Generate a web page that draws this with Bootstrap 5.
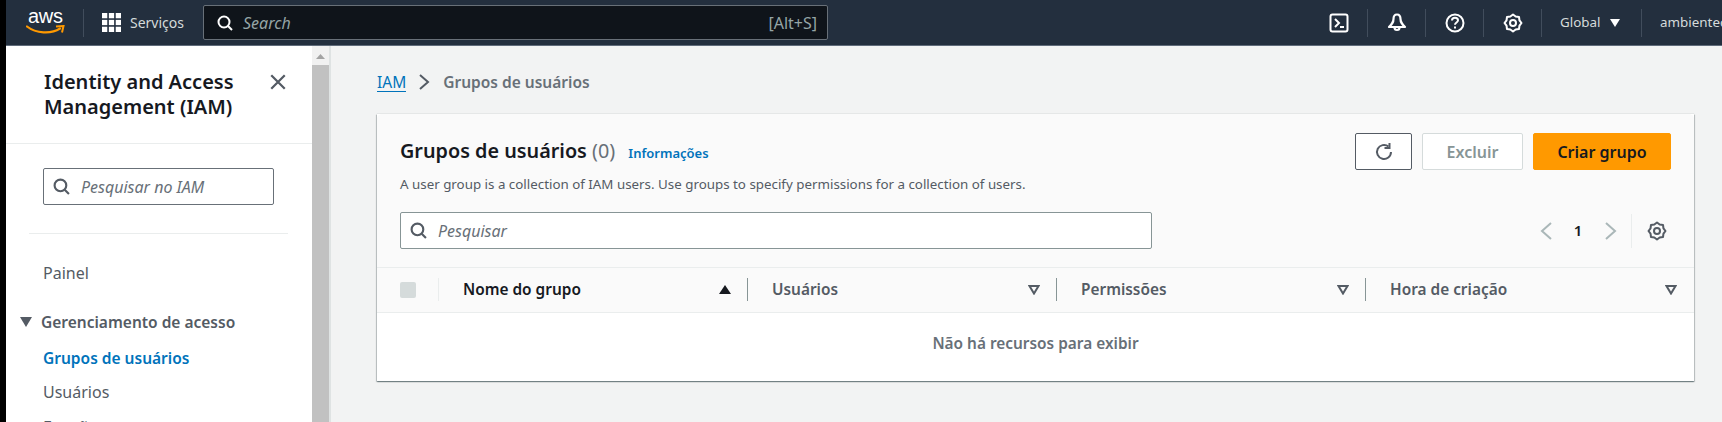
<!doctype html>
<html lang="pt-BR">
<head>
<meta charset="utf-8">
<title>Grupos de usuários</title>
<link rel="stylesheet" href="https://cdn.jsdelivr.net/npm/bootstrap@5.3.0/dist/css/bootstrap.min.css">
<style>
html,body{height:422px;overflow:hidden;}
body{background:#000;font-family:"Noto Sans","Open Sans",sans-serif;font-size:16px;color:#16191f;}
svg{display:block;flex:none;}
.shell{margin-left:6px;height:422px;display:flex;flex-direction:column;}
.topbar{height:46px;flex:none;background:#232f3e;color:#d5dbdb;border-bottom:1px solid #5f6b7a;overflow:hidden;font-size:14px;white-space:nowrap;}
.topbar>*{flex:none;}
.aws-logo{width:40px;margin-left:20px;color:#fff;height:30px;}
.aws-word{font-family:"Liberation Sans",sans-serif;font-size:20px;line-height:17px;letter-spacing:-.3px;display:block;padding-left:2px;}
.aws-smile{margin-top:0;}
.top-sep{width:1px;height:28px;background:#414d5c;flex:none;}
.sep-logo{margin-left:17px;margin-right:18px;}
.svc-label{margin-left:9px;width:53px;}
.top-search{margin-left:20px;width:625px;height:35px;background:#0f141a;border:1px solid #687078;border-radius:2px;padding:0 10px 0 13px;font-size:16px;color:#95a5a6;}
.top-search em{margin-left:10px;flex:1;}
.top-tools{margin-left:482px;}
.tool-cell{width:57px;}
.region{margin-left:18px;width:44px;font-size:13.400px;}
.region-caret{margin-left:6px;margin-right:21px;}
.user-name{margin-left:18px;font-size:13.400px;}
.workspace{flex:1;min-height:0;display:flex;}
.side-nav{width:306px;flex:none;background:#fff;overflow:hidden;}
.side-title{height:98px;padding:23px 25px 0 38px;border-bottom:1px solid #eaeded;font-size:20px;line-height:25px;font-weight:600;}
.side-close{color:#545b64;margin-top:4px;}
.side-search{margin:24px 38px 0 37px;height:37px;border:1px solid #687078;border-radius:2px;padding:0 9px;color:#687078;font-size:16px;}
.side-search em{margin-left:11px;}
.side-rule{margin:28px 24px 0 23px;border-top:1px solid #eaeded;}
.nav-item-plain{color:#545b64;margin-left:37px;line-height:20px;}
.item-painel{margin-top:29px;}
.nav-group{margin-top:29px;margin-left:14px;color:#545b64;font-weight:600;line-height:20px;font-size:15.500px;}
.nav-group svg{margin-right:9px;}
.nav-active{color:#0073bb;font-weight:600;margin:16px 0 0 37px;line-height:20px;font-size:15.500px;}
.item-users{margin-top:14px;}
.item-cut{margin-top:15px;}
.fake-scroll{width:17px;flex:none;background:#f1f1f1;display:flex;flex-direction:column;align-items:center;}
.scroll-arrow{margin:8px 0 6px;}
.scroll-thumb{flex:1;width:100%;background:#c1c1c1;}
.main-pane{flex:1;min-width:0;background:#f2f3f3;border-left:2px solid #dfe3e3;padding:25px 28px 0 46px;}
.crumbs{height:22px;line-height:22px;}
.crumb-link{color:#0073bb;text-decoration:none;border-bottom:1px solid #0073bb;line-height:18px;font-size:15.500px;}
.crumb-chev{margin:0 13px;color:#545b64;}
.crumb-now{color:#687078;font-weight:600;font-size:15.500px;}
.group-card{margin-top:21px;height:267px;border:0;border-radius:0;background:#fff;box-shadow:0 0 1px 0 rgba(0,28,36,.3),0 1px 1px 0 rgba(0,28,36,.3),1px 1px 1px 0 rgba(0,28,36,.15),-1px 1px 1px 0 rgba(0,28,36,.15);}
.card-top{background:#fafafa;height:154px;padding:19px 23px 0 23px;border:0;border-radius:0;border-bottom:1px solid #eaeded;}
.title-block{margin-top:6px;}
.card-name{font-size:19.800px;line-height:24px;font-weight:600;margin:0;}
.card-count{font-weight:400;color:#687078;}
.info-link{color:#0073bb;font-size:13px;font-weight:600;text-decoration:none;margin-left:8px;}
.card-desc{font-size:13.350px;line-height:16px;color:#545b64;margin:11px 0 0;}
.act-row{gap:10px;}
.act-btn{height:37px;border-radius:2px;font-size:16px;font-weight:600;padding:0;display:flex;align-items:center;justify-content:center;}
.btn-reload{width:57px;background:#fff;border:1px solid #545b64;color:#545b64;}
.btn-off,.btn-off:disabled{width:101px;background:#fff;border:1px solid #d5dbdb;color:#879596;opacity:1;}
.btn-make{width:138px;background:#ff9900;border:1px solid #ff9900;color:#16191f;}
.tool-row{margin-top:20px;}
.list-search{width:752px;height:37px;background:#fff;border:1px solid #879596;border-radius:2px;padding:0 9px;color:#687078;font-size:16px;}
.list-search em{margin-left:11px;}
.pager{color:#aab7b8;}
.pager b{color:#16191f;font-size:15px;font-weight:600;width:12px;text-align:center;margin:0 21px 0 20px;}
.pager-rule{width:1px;height:34px;background:#eaeded;margin:0 15px 0 14px;}
.pager-gear{color:#545b64;margin-right:4px;}
.grp-table{table-layout:fixed;width:1317px;margin:0;}
.grp-table th{background:#fafafa;height:44px;padding:0;border-bottom:1px solid #eaeded;font-size:15.400px;font-weight:600;color:#545b64;vertical-align:middle;}
.grp-table td{height:68px;padding:0 0 5px;border:0;text-align:center;color:#687078;font-weight:600;background:#fff;vertical-align:middle;font-size:15.400px;}
.c-check{width:62px;}
.c-name{width:309px;}
.c-users{width:309px;}
.c-perm{width:309px;}
.grp-table th .cell{height:23px;padding-right:16px;border-right:1px solid #879596;padding-left:24px;}
.grp-table th:first-child .cell{border-right-color:#eaeded;padding:0 0 0 23px;}
.grp-table th:last-child .cell{border-right:0;padding-right:17px;}
.grp-table th .first-col{color:#16191f;}
.box-check{width:16px;height:16px;background:#d5dbdb;border-radius:2px;}
</style>
</head>
<body>
<div class="shell">
  <header class="topbar d-flex align-items-center">
    <div class="aws-logo">
      <span class="aws-word">aws</span>
      <svg class="aws-smile" width="40" height="10" viewBox="0 0 40 10"><path d="M1 1.500c9 7 24 8 33 2" fill="none" stroke="#ff9900" stroke-width="2.200" stroke-linecap="round"/><path d="M30 1.500l7.500-.5-1.500 6.500" fill="none" stroke="#ff9900" stroke-width="2"/></svg>
    </div>
    <div class="top-sep sep-logo"></div>
    <svg width="19" height="19" viewBox="0 0 18 18" fill="#fff"><rect width="5" height="5"/><rect x="6.500" width="5" height="5"/><rect x="13" width="5" height="5"/><rect y="6.500" width="5" height="5"/><rect x="6.500" y="6.500" width="5" height="5"/><rect x="13" y="6.500" width="5" height="5"/><rect y="13" width="5" height="5"/><rect x="6.500" y="13" width="5" height="5"/><rect x="13" y="13" width="5" height="5"/></svg>
    <span class="svc-label">Serviços</span>
    <div class="top-search d-flex align-items-center">
      <svg width="16" height="16" viewBox="0 0 16 16" fill="none" stroke="#fff" stroke-width="2"><circle cx="7" cy="7" r="5.500"/><path d="M11 11l4 4"/></svg>
      <em>Search</em><span>[Alt+S]</span>
    </div>
    <div class="top-tools d-flex align-items-center">
      <div class="tool-cell d-flex justify-content-center"><svg width="20" height="20" viewBox="0 0 20 20" fill="none" stroke="#fff" stroke-width="2"><rect x="1.500" y="1.500" width="17" height="17" rx="2"/><path d="M6 6l4 4-4 4M11 14h4"/></svg></div>
      <div class="top-sep"></div>
      <div class="tool-cell d-flex justify-content-center"><svg width="20" height="20" viewBox="0 0 20 20" fill="none" stroke="#fff" stroke-width="2.200" stroke-linejoin="round"><path d="M10 1.500c-2.500 0-3.500 2-3.500 4.500 0 3.500-1.500 5-4.500 8h16c-3-3-4.500-4.500-4.500-8 0-2.500-1-4.500-3.500-4.500z"/><path d="M7.500 14.500a2.500 2.500 0 0 0 5 0"/></svg></div>
      <div class="top-sep"></div>
      <div class="tool-cell d-flex justify-content-center"><svg width="20" height="20" viewBox="0 0 20 20" fill="none" stroke="#fff" stroke-width="2"><circle cx="10" cy="10" r="8.500"/><path d="M7 7.500c0-1.700 1.300-2.700 3-2.700s3 1 3 2.500c0 2.200-3 2.200-3 4.500"/><path d="M10 13.500v2"/></svg></div>
      <div class="top-sep"></div>
      <div class="tool-cell d-flex justify-content-center"><svg width="20" height="20" viewBox="0 0 20 20" fill="none" stroke="#fff" stroke-width="2" stroke-linejoin="round"><path d="M18.500 10 16.470 12.680 16.010 16.010 12.680 16.470 10 18.500 7.320 16.470 3.990 16.010 3.530 12.680 1.500 10 3.530 7.320 3.990 3.990 7.320 3.530 10 1.500 12.680 3.530 16.010 3.990 16.470 7.320z"/><circle cx="10" cy="10" r="3"/></svg></div>
      <div class="top-sep"></div>
      <span class="region">Global</span>
      <svg class="region-caret" width="10" height="8" viewBox="0 0 10 8" fill="#fff"><path d="M0 0h10L5 8z"/></svg>
      <div class="top-sep"></div>
      <span class="user-name">ambientec</span>
    </div>
  </header>
  <div class="workspace">
    <nav class="side-nav">
      <div class="side-title d-flex justify-content-between align-items-start">
        <span>Identity and Access<br>Management (IAM)</span>
        <svg class="side-close" width="18" height="18" viewBox="0 0 16 16" fill="none" stroke="currentColor" stroke-width="2"><path d="M2 2l12 12M14 2L2 14"/></svg>
      </div>
      <div class="side-search d-flex align-items-center">
        <svg width="17" height="17" viewBox="0 0 16 16" fill="none" stroke="#545b64" stroke-width="2"><circle cx="7" cy="7" r="5.500"/><path d="M11 11l4 4"/></svg>
        <em>Pesquisar no IAM</em>
      </div>
      <div class="side-rule"></div>
      <div class="nav-item-plain item-painel">Painel</div>
      <div class="nav-group d-flex align-items-center"><svg width="12" height="10" viewBox="0 0 12 10" fill="#545b64"><path d="M0 0h12L6 10z"/></svg><span>Gerenciamento de acesso</span></div>
      <div class="nav-active">Grupos de usuários</div>
      <div class="nav-item-plain item-users">Usuários</div>
      <div class="nav-item-plain item-cut">Funções</div>
    </nav>
    <div class="fake-scroll">
      <svg class="scroll-arrow" width="9" height="5" viewBox="0 0 9 5" fill="#a3a3a3"><path d="M4.500 0L9 5H0z"/></svg>
      <div class="scroll-thumb"></div>
    </div>
    <main class="main-pane">
      <div class="crumbs d-flex align-items-center">
        <a class="crumb-link" href="#">IAM</a>
        <svg class="crumb-chev" width="11" height="16" viewBox="0 0 11 16" fill="none" stroke="currentColor" stroke-width="2"><path d="M1 1l8 7-8 7"/></svg>
        <span class="crumb-now">Grupos de usuários</span>
      </div>
      <section class="card group-card">
        <div class="card-header card-top">
          <div class="d-flex justify-content-between align-items-start">
            <div class="title-block">
              <h2 class="card-name">Grupos de usuários <span class="card-count">(0)</span> <a class="info-link" href="#">Informações</a></h2>
              <p class="card-desc">A user group is a collection of IAM users. Use groups to specify permissions for a collection of users.</p>
            </div>
            <div class="d-flex act-row">
              <button class="btn act-btn btn-reload" type="button" aria-label="Atualizar"><svg width="20" height="20" viewBox="0 0 20 20" fill="none" stroke="currentColor" stroke-width="2"><path d="M17 10a7 7 0 1 1-2.500-5.400"/><path d="M15.500 1v5h-5"/></svg></button>
              <button class="btn act-btn btn-off" type="button" disabled>Excluir</button>
              <button class="btn act-btn btn-make" type="button">Criar grupo</button>
            </div>
          </div>
          <div class="tool-row d-flex justify-content-between align-items-center">
            <div class="list-search d-flex align-items-center">
              <svg width="17" height="17" viewBox="0 0 16 16" fill="none" stroke="#545b64" stroke-width="2"><circle cx="7" cy="7" r="5.500"/><path d="M11 11l4 4"/></svg>
              <em>Pesquisar</em>
            </div>
            <div class="pager d-flex align-items-center">
              <svg width="12" height="18" viewBox="0 0 12 18" fill="none" stroke="currentColor" stroke-width="2"><path d="M11 1L2 9l9 8"/></svg>
              <b>1</b>
              <svg width="12" height="18" viewBox="0 0 12 18" fill="none" stroke="currentColor" stroke-width="2"><path d="M1 1l9 8-9 8"/></svg>
              <div class="pager-rule"></div>
              <svg class="pager-gear" width="20" height="20" viewBox="0 0 20 20" fill="none" stroke="currentColor" stroke-width="2" stroke-linejoin="round"><path d="M18.500 10 16.470 12.680 16.010 16.010 12.680 16.470 10 18.500 7.320 16.470 3.990 16.010 3.530 12.680 1.500 10 3.530 7.320 3.990 3.990 7.320 3.530 10 1.500 12.680 3.530 16.010 3.990 16.470 7.320z"/><circle cx="10" cy="10" r="3"/></svg>
            </div>
          </div>
        </div>
        <table class="table grp-table">
          <colgroup><col class="c-check"><col class="c-name"><col class="c-users"><col class="c-perm"><col></colgroup>
          <thead><tr>
            <th><div class="cell d-flex align-items-center"><div class="box-check"></div></div></th>
            <th><div class="cell first-col d-flex justify-content-between align-items-center"><span>Nome do grupo</span><svg width="12" height="9" viewBox="0 0 12 9" fill="#16191f"><path d="M6 0l6 9H0z"/></svg></div></th>
            <th><div class="cell d-flex justify-content-between align-items-center"><span>Usuários</span><svg width="12" height="10" viewBox="0 0 12 10" fill="none" stroke="#545b64" stroke-width="2"><path d="M1.500 1h9L6 8.500z"/></svg></div></th>
            <th><div class="cell d-flex justify-content-between align-items-center"><span>Permissões</span><svg width="12" height="10" viewBox="0 0 12 10" fill="none" stroke="#545b64" stroke-width="2"><path d="M1.500 1h9L6 8.500z"/></svg></div></th>
            <th><div class="cell d-flex justify-content-between align-items-center"><span>Hora de criação</span><svg width="12" height="10" viewBox="0 0 12 10" fill="none" stroke="#545b64" stroke-width="2"><path d="M1.500 1h9L6 8.500z"/></svg></div></th>
          </tr></thead>
          <tbody><tr><td colspan="5">Não há recursos para exibir</td></tr></tbody>
        </table>
      </section>
    </main>
  </div>
</div>
</body>
</html>
